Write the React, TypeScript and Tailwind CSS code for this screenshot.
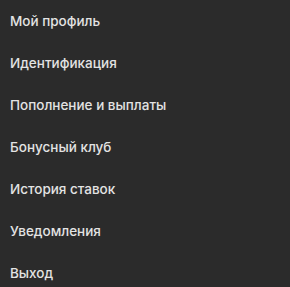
import React from "react";

const items = [
  "Мой профиль",
  "Идентификация",
  "Пополнение и выплаты",
  "Бонусный клуб",
  "История ставок",
  "Уведомления",
  "Выход",
];

export default function App() {
  return (
    <div className="w-[290px] h-[287px] bg-[#2b2b2b] overflow-hidden" style={{ fontFamily: "Inter, 'Noto Sans', sans-serif" }}>
      <ul className="flex flex-col">
        {items.map((t) => (
          <li key={t} className="h-[42px] flex items-center pl-[10px] text-[13.5px] font-medium text-[#e3e3e3]">
            {t}
          </li>
        ))}
      </ul>
    </div>
  );
}
